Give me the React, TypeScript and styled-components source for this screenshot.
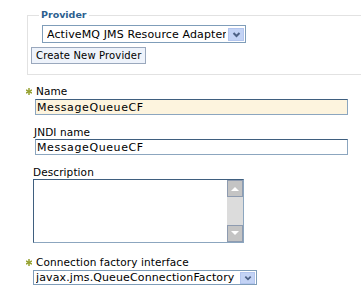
import React from "react";
import styled, { createGlobalStyle } from "styled-components";

const Global = createGlobalStyle`
  html, body { margin: 0; padding: 0; background: #ffffff; overflow: hidden; }
  body { font-family: "DejaVu Sans", Verdana, sans-serif; font-size: 11px; color: #000; }
`;

const Page = styled.div`
  width: 361px;
  height: 293px;
  padding-top: 8px;
  box-sizing: border-box;
  overflow: hidden;
`;

const Fieldset = styled.fieldset`
  margin: 0 0 0 27px;
  padding: 0 0 10px 4px;
  width: 334px;
  box-sizing: border-box;
  border: 1px solid #e2e2e2;
  border-right: none;
  min-width: 0;
`;

const Legend = styled.legend`
  margin-left: 7px;
  padding: 0 2px;
  font-size: 9.5px;
  font-weight: bold;
  color: #2d5f8f;
  line-height: 14px;
`;

const SelectBox = styled.div<{ $w: number; $h: number; $ml?: number; $mt?: number }>`
  display: flex;
  align-items: center;
  justify-content: space-between;
  gap: 2px;
  width: ${(p) => p.$w}px;
  height: ${(p) => p.$h}px;
  margin-left: ${(p) => p.$ml ?? 0}px;
  margin-top: ${(p) => p.$mt ?? 0}px;
  box-sizing: border-box;
  border: 1px solid #7f9db9;
  background: #fff;
  padding: 0 1px 0 ${(p) => (p.$h > 16 ? 4 : 2)}px;
  letter-spacing: 0.12px;
  white-space: nowrap;
  overflow: hidden;
`;

const SelectText = styled.span`
  flex: 1;
  min-width: 0;
  overflow: hidden;
`;

const DropButton = styled.div<{ $size: number }>`
  width: ${(p) => p.$size + 3}px;
  height: ${(p) => p.$size}px;
  flex: none;
  display: flex;
  align-items: center;
  justify-content: center;
  background: #c3d3f5;
  border: 1px solid #b3c5ee;
  box-sizing: border-box;
`;

const Chevron = ({ s }: { s: number }) => (
  <svg width={s} height={s} viewBox="0 0 9 9">
    <path d="M1.5 3 L4.5 6 L7.5 3" fill="none" stroke="#4d6185" strokeWidth="2" />
  </svg>
);

const Button = styled.button`
  display: block;
  margin: 4px 0 0 -1px;
  height: 17px;
  padding: 0 4px;
  font-family: inherit;
  font-size: 10px;
  letter-spacing: 0.15px;
  line-height: 15px;
  color: #000;
  background: #eef3fb;
  border: 1px solid #9aa8bd;
  border-radius: 0;
`;

const Form = styled.div`
  display: flex;
  flex-direction: column;
  padding: 10px 0 0 33px;
`;

const Label = styled.div<{ $required?: boolean; $ml?: number; $mt?: number }>`
  display: flex;
  align-items: center;
  gap: 4px;
  height: 13px;
  line-height: 13px;
  font-size: 10.5px;
  letter-spacing: 0.1px;
  margin-left: ${(p) => (p.$required ? -7 : p.$ml ?? 0)}px;
  margin-top: ${(p) => p.$mt ?? 0}px;
`;

const Star = () => (
  <svg width="6" height="7" viewBox="0 0 6 7">
    <g stroke="#95a02e" strokeWidth="1.5">
      <line x1="3" y1="0" x2="3" y2="7" />
      <line x1="0" y1="1.8" x2="6" y2="5.2" />
      <line x1="0" y1="5.2" x2="6" y2="1.8" />
    </g>
  </svg>
);

const TextInput = styled.input<{ $bg?: string }>`
  display: block;
  width: 313px;
  height: 16px;
  margin: ${(p) => (p.$bg ? 1 : 0)}px 0 0 2px;
  box-sizing: border-box;
  padding: 0 1px;
  font-family: inherit;
  font-size: 11px;
  letter-spacing: 0.6px;
  color: #000;
  background: ${(p) => p.$bg ?? "#fff"};
  border: 1px solid #8ca6bf;
  border-top-color: #3f5f7f;
  outline: none;
`;

const AreaBox = styled.div`
  display: flex;
  width: 211px;
  height: 64px;
  box-sizing: border-box;
  border: 1px solid #8ca6bf;
  border-top-color: #3f5f7f;
  border-left-color: #3f5f7f;
  background: #fff;
`;

const Area = styled.textarea`
  flex: 1;
  border: none;
  outline: none;
  resize: none;
  overflow: hidden;
  font-family: inherit;
  font-size: 11px;
  padding: 1px;
`;

const Scrollbar = styled.div`
  width: 16px;
  display: flex;
  flex-direction: column;
  background: #dcdcdc;
`;

const Track = styled.div`
  flex: 1;
`;

const ArrowBtn = styled.div`
  height: 17px;
  box-sizing: border-box;
  border: 1px solid #8e9bb0;
  background: #c4c4c4;
  display: flex;
  align-items: center;
  justify-content: center;
`;

const Tri = ({ up }: { up?: boolean }) => (
  <svg width="8" height="5" viewBox="0 0 8 5">
    <path d={up ? "M0 5 L4 1 L8 5 Z" : "M0 0 L8 0 L4 4 Z"} fill="#ffffff" />
  </svg>
);

export default function App() {
  return (
    <Page>
      <Global />
      <Fieldset>
        <Legend>Provider</Legend>
        <SelectBox $w={204} $h={18} $ml={10} $mt={3}>
          <SelectText>ActiveMQ JMS Resource Adapter</SelectText>
          <DropButton $size={13}>
            <Chevron s={9} />
          </DropButton>
        </SelectBox>
        <Button>Create New Provider</Button>
      </Fieldset>
      <Form>
        <Label $required>
          <Star />
          <span>Name</span>
        </Label>
        <TextInput $bg="#fdf4de" defaultValue="MessageQueueCF" />
        <Label $ml={1} $mt={11}>JNDI name</Label>
        <TextInput defaultValue="MessageQueueCF" />
        <Label $mt={11}>Description</Label>
        <AreaBox>
          <Area />
          <Scrollbar>
            <ArrowBtn>
              <Tri up />
            </ArrowBtn>
            <Track />
            <ArrowBtn>
              <Tri />
            </ArrowBtn>
          </Scrollbar>
        </AreaBox>
        <Label $required $mt={13}>
          <Star />
          <span>Connection factory interface</span>
        </Label>
        <SelectBox $w={224} $h={15} $mt={1}>
          <SelectText>javax.jms.QueueConnectionFactory</SelectText>
          <DropButton $size={12}>
            <Chevron s={8} />
          </DropButton>
        </SelectBox>
      </Form>
    </Page>
  );
}
